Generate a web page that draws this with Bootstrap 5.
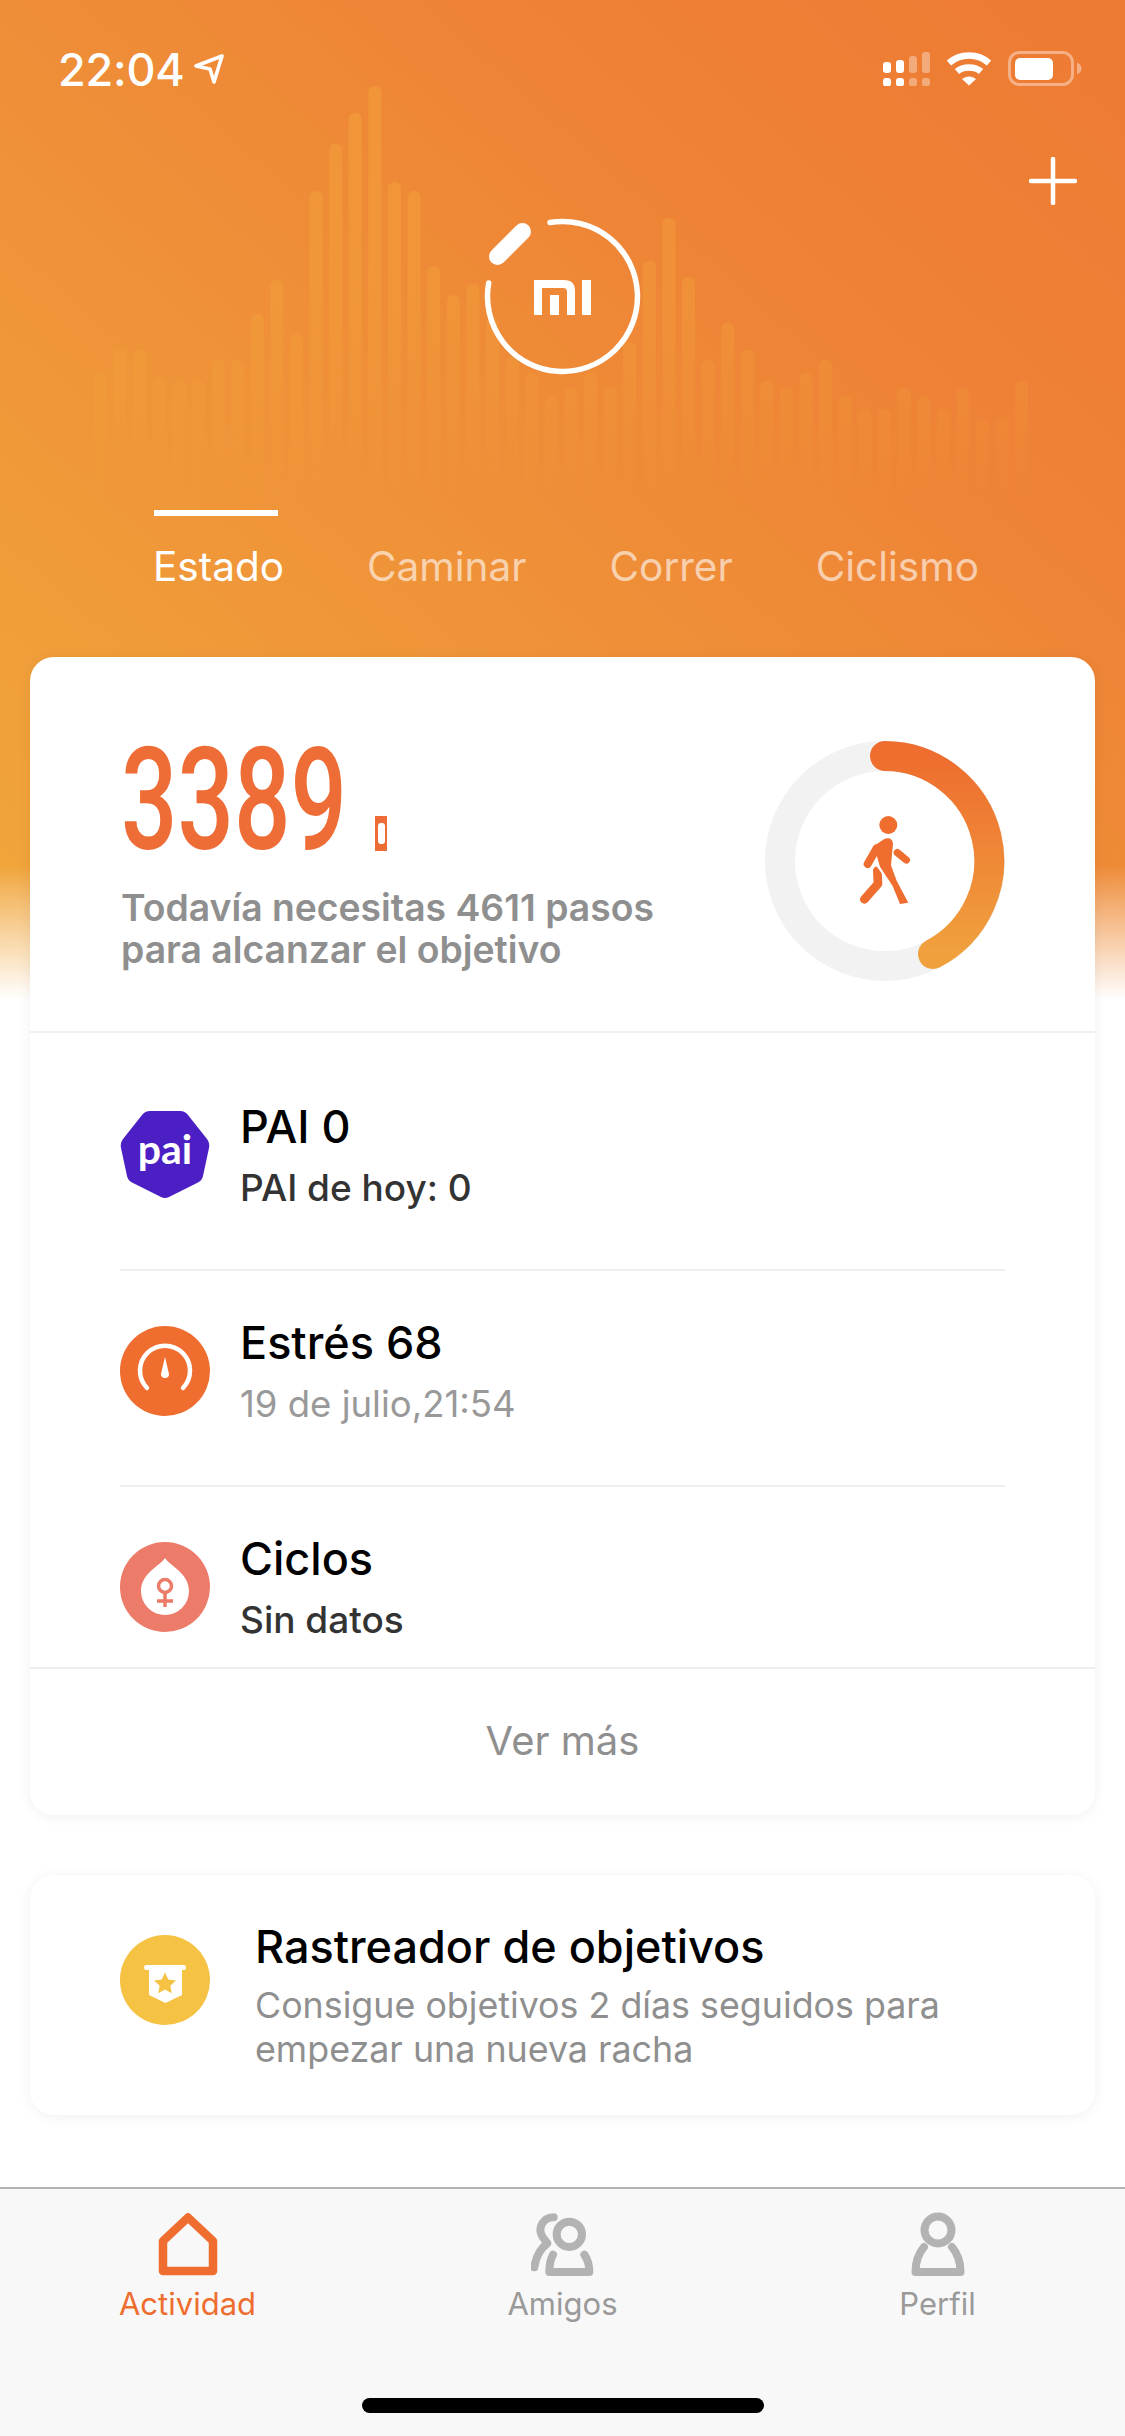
<!DOCTYPE html>
<html lang="es">
<head>
    <meta charset="UTF-8">
    <meta name="viewport" content="width=device-width, initial-scale=1.0">
    <title>Actividad</title>
    <link href="https://cdn.jsdelivr.net/npm/bootstrap@5.3.0/dist/css/bootstrap.min.css" rel="stylesheet">
    <style>
        body {
            font-family: Inter, "Noto Sans", sans-serif;
            background: #fff;
            margin: 0;
        }
        .phone {
            width: 1125px;
            height: 2436px;
            overflow: hidden;
            background:
                linear-gradient(to bottom, rgba(255,255,255,0) 865px, #fff 1000px),
                linear-gradient(to top right, #f1a83b 0, #ee8236 72%, #ee7a33 100%);
            background-size: 100% 1000px, 100% 1000px;
            background-repeat: no-repeat;
        }
        .bars-bg { top: 0; left: 0; }
        .status-row { height: 138px; padding: 0 43px 0 58px; color: #fff; }
        .clock { font-size: 45px; font-weight: 500; line-height: 1; letter-spacing: -.2px; }
        .head-grid { display: grid; grid-template-columns: 1fr auto 1fr; }
        .ring-logo { margin-top: 69px; }
        .plus-icon { margin: 19px 48px 0 0; }
        .tabs-row { margin-top: 123px; padding-left: 153px; gap: 83px; height: 147px; }
        .tabs-row .nav-link {
            padding: 0;
            color: rgba(255,255,255,.6);
            font-size: 40.500px;
            line-height: 50px;
            padding-top: 32px;
            position: relative;
        }
        .tabs-row .nav-link.active { color: #fff; }
        .tabs-row .nav-link.active::before {
            content: "";
            position: absolute;
            top: 0;
            left: 1px;
            width: 124px;
            height: 6px;
            background: #fff;
        }
        .sheet {
            margin: 0 30px;
            border: 0;
            border-radius: 24px;
            box-shadow: 0 2px 14px rgba(0,0,0,.06);
            overflow: hidden;
        }
        .steps-top { height: 376px; padding: 84px 90px 0 91px; border-bottom: 2px solid #f0f0f0; }
        .steps-num-wrap { height: 120px; }
        .steps-num {
            width: 254px;
            font-family: Roboto, sans-serif;
            font-size: 142px;
            font-weight: 500;
            line-height: 120px;
            color: #ee6d36;
            transform: scaleX(.7);
            transform-origin: left center;
            white-space: nowrap;
        }
        .band-mark {
            width: 12px;
            height: 35px;
            margin-bottom: 10px;
            background: #ee6d36;
            display: flex;
            align-items: center;
            justify-content: center;
        }
        .band-mark span { width: 7px; height: 21px; border-radius: 3px; background: #fff; display: block; }
        .steps-note { margin-top: 26px; font-size: 37.300px; line-height: 42px; font-weight: 600; color: #8f8f8f; white-space: nowrap; }
        .metric-list { height: 634px; overflow: hidden; padding: 0 90px; }
        .metric-list .list-group-item {
            padding: 44px 0 0;
            height: 216px;
            flex-shrink: 0;
            border-color: #efefef;
            border-width: 0 0 2px;
            gap: 30px;
            background: transparent;
        }
        .metric-list .list-group-item:first-child { padding-top: 66px; height: 238px; }
        .round-icon { width: 90px; height: 90px; margin-top: 11px; flex-shrink: 0; }
        .metric-title { font-size: 45px; line-height: 56px; font-weight: 500; color: #000; white-space: nowrap; }
        .metric-sub { margin-top: 5px; font-size: 37px; line-height: 56px; font-weight: 500; color: #333; }
        .metric-sub.is-muted { font-size: 36.500px; font-weight: 400; color: #999; }
        .more-row {
            height: 148px;
            padding-bottom: 2px;
            background: #fff;
            border-top: 2px solid #efefef;
            font-size: 40px;
            color: #8f8f8f;
        }
        .goal-sheet { margin-top: 60px; height: 240px; padding: 44px 90px 0; gap: 45px; }
        .goal-sheet .round-icon { margin-top: 16px; }
        .goal-sub { margin-top: 8px; font-size: 35.800px; line-height: 44px; color: #8f8f8f; white-space: nowrap; }
        .tabbar { height: 249px; background: #f8f8f8; border-top: 2px solid #b3b3b3; padding-top: 23px; }
        .tabbar-item { flex: 1 1 0; text-align: center; }
        .tabbar-item svg { display: block; margin: 0 auto; }
        .tabbar-label { margin-top: 10px; font-size: 31px; line-height: 36px; color: #9a9a9a; }
        .tabbar-item.is-on .tabbar-label { color: #ee6d2f; }
        .home-bar { width: 402px; height: 15px; margin: 76px auto 0; background: #000; border-radius: 8px; }
    </style>
</head>
<body>
<div class="phone position-relative d-flex flex-column">

    <svg id="barras" class="bars-bg position-absolute" width="1125" height="520">
        <defs>
            <linearGradient id="fadeBar" gradientUnits="userSpaceOnUse" x1="0" y1="85" x2="0" y2="500">
                <stop offset="0" stop-color="#f4ac3c" stop-opacity=".4"/>
                <stop offset=".5" stop-color="#f4ac3c" stop-opacity=".3"/>
                <stop offset=".75" stop-color="#f4ac3c" stop-opacity=".16"/>
                <stop offset="1" stop-color="#f4ac3c" stop-opacity="0"/>
            </linearGradient>
        </defs>
    </svg>

    <div class="position-relative d-flex flex-column flex-grow-1">
        <!-- barra de estado -->
        <div class="status-row d-flex align-items-center justify-content-between">
            <div class="d-flex align-items-center">
                <span class="clock">22:04</span>
                <svg class="ms-2" width="32" height="32" viewBox="0 0 32 32" fill="none" stroke="#fff" stroke-width="3.6" stroke-linejoin="round"><path d="M3 13 29 3 21 29 17 16Z"/></svg>
            </div>
            <div class="d-flex align-items-center">
                <svg width="47" height="34" viewBox="0 0 47 34" fill="#fff">
                    <rect x="0" y="10" width="8" height="11" rx="3"/>
                    <rect x="13" y="8" width="8" height="13" rx="3"/>
                    <rect x="26" y="4" width="8" height="17" rx="3" opacity=".35"/>
                    <rect x="39" y="0" width="8" height="21" rx="3" opacity=".35"/>
                    <rect x="0" y="26" width="8" height="8.5" rx="3"/>
                    <rect x="13" y="26" width="8" height="8.5" rx="3"/>
                    <rect x="26" y="26" width="8" height="8.5" rx="3" opacity=".35"/>
                    <rect x="39" y="26" width="8" height="8.5" rx="3" opacity=".35"/>
                </svg>
                <svg class="ms-3" width="46" height="34" viewBox="0 0 46 34" fill="none" stroke="#fff" stroke-width="6.5">
                    <path d="M3 11C14 1 32 1 43 11"/>
                    <path d="M11 19.500C17 14 29 14 35 19.500"/>
                    <path d="M16 27 23 33.500 30 27C26 23.500 20 23.500 16 27Z" fill="#fff" stroke="none"/>
                </svg>
                <svg class="ms-3" width="74" height="36" viewBox="0 0 74 36" fill="none">
                    <rect x="1.500" y="1.500" width="63" height="32" rx="10" stroke="#fff" stroke-opacity=".4" stroke-width="3"/>
                    <rect x="7" y="7" width="38" height="22" rx="5" fill="#fff"/>
                    <path d="M69 11.500C72 13 73.500 15 73.500 17.500S72 22 69 23.500Z" fill="#fff" fill-opacity=".4"/>
                </svg>
            </div>
        </div>

        <div class="head-grid">
            <div></div>
            <svg class="ring-logo" width="180" height="180" viewBox="473 207 180 180" fill="none" stroke="#fff">
                <path d="M550 222.500A75 75 0 1 1 488.700 283" stroke-width="5.500" stroke-linecap="round"/>
                <path d="M497.500 256.500 522.500 231.500" stroke-width="17" stroke-linecap="round"/>
                <path fill="#fff" stroke="none" fill-rule="evenodd" d="M534 280H564Q575 280 575 291V315H567V292Q567 288 563 288H542V315H534ZM550 295H559V315H550ZM582 280H591V315H582Z"/>
            </svg>
            <div class="d-flex justify-content-end align-items-start">
                <svg class="plus-icon" width="48" height="48" viewBox="0 0 48 48" stroke="#fff" stroke-width="4.500" stroke-linecap="round"><path d="M24 2V46M2 24H46"/></svg>
            </div>
        </div>

        <ul class="nav tabs-row flex-nowrap">
            <li class="nav-item"><a class="nav-link active" href="#">Estado</a></li>
            <li class="nav-item"><a class="nav-link" href="#">Caminar</a></li>
            <li class="nav-item"><a class="nav-link" href="#">Correr</a></li>
            <li class="nav-item"><a class="nav-link" href="#">Ciclismo</a></li>
        </ul>

        <div class="card sheet">
            <div class="steps-top d-flex justify-content-between align-items-start">
                <div>
                    <div class="steps-num-wrap d-flex align-items-end">
                        <div class="steps-num">3389</div>
                        <div class="band-mark"><span></span></div>
                    </div>
                    <div class="steps-note">Todavía necesitas 4611 pasos<br>para alcanzar el objetivo</div>
                </div>
                <svg width="240" height="240" viewBox="0 0 240 240" fill="none">
                    <defs>
                        <linearGradient id="ringGrad" x1="0" y1="0" x2="0" y2="1">
                            <stop offset="0" stop-color="#ee6d2f"/>
                            <stop offset="1" stop-color="#f0a13e"/>
                        </linearGradient>
                    </defs>
                    <circle cx="120" cy="120" r="105" stroke="#f2f2f2" stroke-width="30"/>
                    <path d="M120 15A105 105 0 0 1 168 213" stroke="url(#ringGrad)" stroke-width="30" stroke-linecap="round"/>
                    <g transform="translate(-25 -21) scale(.3333)" stroke-linecap="round" stroke-linejoin="round">
                        <circle cx="445" cy="315" r="27" fill="#ee6d2f"/>
                        <path d="M412 452 414 492 373 538" stroke="#ee6d2f" stroke-width="26"/>
                        <path d="M424 428 470 490 492 545" stroke="#fff" stroke-width="36"/>
                        <path d="M402 378 434 356Q458 350 459 372L453 436 470 482 505 548 480 552 458 498 420 440Z" fill="#ee6d2f"/>
                        <path d="M410 385 383 432" stroke="#ee6d2f" stroke-width="24"/>
                        <path d="M472 398 499 420" stroke="#ee6d2f" stroke-width="22"/>
                    </g>
                </svg>
            </div>

            <div class="metric-list list-group list-group-flush">
                <div class="list-group-item d-flex align-items-start">
                    <svg class="round-icon" viewBox="0 0 90 90">
                        <path d="M30 1H60Q65 1 68 5L87 29Q90 33 89 38L83 66Q82 71 77 73L49 87Q45 89 41 87L13 73Q8 71 7 66L1 38Q0 33 3 29L22 5Q25 1 30 1Z" fill="#4b1fc4"/>
                        <text x="45" y="54" text-anchor="middle" font-family="Lato, sans-serif" font-size="41" font-weight="700" fill="#fff">pai</text>
                    </svg>
                    <div>
                        <div class="metric-title">PAI 0</div>
                        <div class="metric-sub">PAI de hoy: 0</div>
                    </div>
                </div>
                <div class="list-group-item d-flex align-items-start">
                    <svg class="round-icon" viewBox="0 0 90 90">
                        <circle cx="45" cy="45" r="45" fill="#ee6d2f"/>
                        <path d="M27 62A25 25 0 1 1 63 62" fill="none" stroke="#fff" stroke-width="4.500" stroke-linecap="round"/>
                        <path d="M45 31 49 48A4 4 0 1 1 41 48Z" fill="#fff"/>
                    </svg>
                    <div>
                        <div class="metric-title">Estrés 68</div>
                        <div class="metric-sub is-muted">19 de julio,21:54</div>
                    </div>
                </div>
                <div class="list-group-item d-flex align-items-start">
                    <svg class="round-icon" viewBox="0 0 90 90">
                        <circle cx="45" cy="45" r="45" fill="#ec7b69"/>
                        <path d="M45 16C50 24 69 31 69 49A24 24 0 1 1 21 49C21 31 40 24 45 16Z" fill="#fff"/>
                        <circle cx="45" cy="44" r="6.500" fill="none" stroke="#ec7b69" stroke-width="3.500"/>
                        <path d="M45 51V65M37 59H53" stroke="#ec7b69" stroke-width="3.500"/>
                    </svg>
                    <div>
                        <div class="metric-title">Ciclos</div>
                        <div class="metric-sub">Sin datos</div>
                    </div>
                </div>
            </div>
            <div class="more-row d-flex align-items-center justify-content-center">Ver más</div>
        </div>

        <div class="card sheet goal-sheet flex-row align-items-start">
            <svg class="round-icon" viewBox="0 0 90 90">
                <circle cx="45" cy="45" r="45" fill="#f5c244"/>
                <path d="M26 30H64Q66 30 66 32.500T64 35H62V60L45.500 68 29 60V35H26Q24 35 24 32.500T26 30Z" fill="#fff"/>
                <path d="M45 37.500 48.300 44.500 56 45.400 50.300 50.700 51.800 58.300 45 54.500 38.200 58.300 39.700 50.700 34 45.400 41.700 44.500Z" fill="#f5c244"/>
            </svg>
            <div>
                <div class="metric-title">Rastreador de objetivos</div>
                <div class="goal-sub">Consigue objetivos 2 días seguidos para<br>empezar una nueva racha</div>
            </div>
        </div>

        <div class="tabbar mt-auto">
            <div class="d-flex">
                <div class="tabbar-item is-on">
                    <svg width="60" height="64" viewBox="0 0 60 64" fill="none" stroke="#ee6d2f" stroke-width="8.500" stroke-linejoin="round"><path d="M30 5.500 5 29V59H55V29Z"/></svg>
                    <div class="tabbar-label">Actividad</div>
                </div>
                <div class="tabbar-item">
                    <svg width="64" height="64" viewBox="50 36 192 192" fill="none" stroke="#b3b3b3" stroke-width="24" stroke-linecap="round" stroke-linejoin="round">
                        <path d="M118 52C88 52 70 80 82 106 86 116 95 122 99 130 76 148 64 172 60 202"/>
                        <circle cx="165" cy="103" r="38"/>
                        <path d="M116 164C108 178 105 195 105 216H225C225 195 220 178 210 164"/>
                    </svg>
                    <div class="tabbar-label">Amigos</div>
                </div>
                <div class="tabbar-item">
                    <svg width="54" height="64" viewBox="0 0 54 64" fill="none" stroke="#b3b3b3" stroke-width="8" stroke-linejoin="round">
                        <circle cx="27" cy="18" r="13.500"/>
                        <path d="M13 35C7 42 4.500 50 4.500 60H49.500C49.500 50 47 42 41 35" stroke-linecap="round"/>
                    </svg>
                    <div class="tabbar-label">Perfil</div>
                </div>
            </div>
            <div class="home-bar"></div>
        </div>
    </div>
</div>

<script>
    // alturas del grafico de fondo, de izquierda a derecha
    const topes = [373,350,350,378,381,381,360,360,314,280,334,191,144,113,86,182,191,266,295,284,318,357,373,396,388,373,388,342,261,218,277,360,323,350,381,388,373,360,396,409,409,388,396,409,388,420,417,381];
    const svg = document.getElementById("barras");
    topes.forEach((y, i) => {
        const r = document.createElementNS("http://www.w3.org/2000/svg", "rect");
        r.setAttribute("x", 94 + i * 19.6);
        r.setAttribute("y", y);
        r.setAttribute("width", 13);
        r.setAttribute("height", 500 - y);
        r.setAttribute("rx", 6);
        r.setAttribute("fill", "url(#fadeBar)");
        svg.appendChild(r);
    });
</script>
<script src="https://cdn.jsdelivr.net/npm/bootstrap@5.3.0/dist/js/bootstrap.bundle.min.js"></script>
</body>
</html>
